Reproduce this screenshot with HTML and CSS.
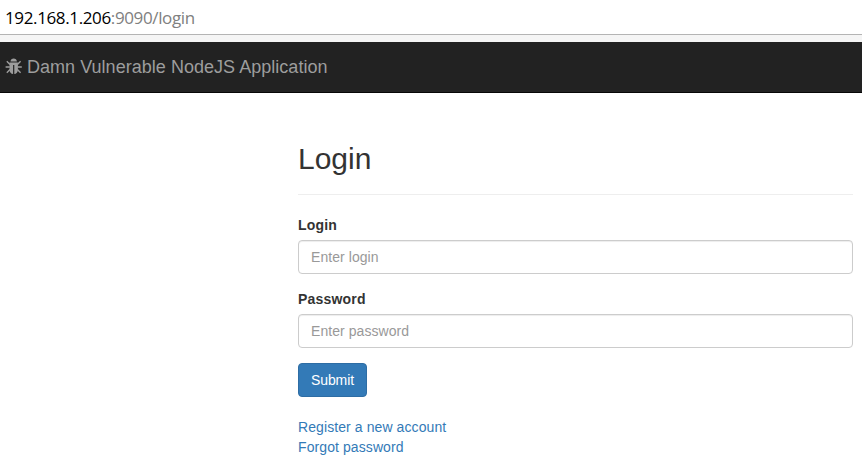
FILE: index.html
```html
<!DOCTYPE html>
<html lang="en">
<head>
<meta charset="utf-8">
<title>Login</title>
<link rel="stylesheet" href="styles.css">
</head>
<body>
<div class="address"><span class="host">192.168.1.206</span>:9090/login</div>
<div class="toolbar-edge"></div>
<nav class="navbar">
<a class="brand"><svg class="bug" viewBox="0 0 18 18" width="18" height="18"><path fill="currentColor" d="M5.500 3.600C5.500 1.800 7 .6 8.700.6s3.200 1.200 3.200 3zM4.500 4.600h8.400v7.200c0 2.500-1.600 4.200-3.600 4.200V7H8.100v9c-2 0-3.600-1.700-3.600-4.200z"/><path fill="none" stroke="currentColor" stroke-width="1.400" d="M5 6.500 1.800 3.300M.6 9h4.200M5 11.600l-3.200 3.200M12.400 6.500l3.200-3.200M12.600 9h4.200M12.400 11.600l3.200 3.200"/></svg><span>Damn Vulnerable NodeJS Application</span></a>
</nav>
<main class="content">
<h1>Login</h1>
<form>
<label for="login">Login</label>
<input id="login" type="text" placeholder="Enter login">
<label for="password">Password</label>
<input id="password" type="password" placeholder="Enter password">
<button type="button">Submit</button>
</form>
<div class="links"><a>Register a new account</a><a>Forgot password</a></div>
</main>
</body>
</html>
```
FILE: styles.css
```css
* { box-sizing: border-box; }
body { margin: 0; height: 472px; overflow: hidden; background: #fff; color: #333; font: 14px/20px "Liberation Sans", Arial, sans-serif; }
.address { height: 35px; padding: 0 5px; border-bottom: 1px solid #b4b4b4; font: 17px/36px "Open Sans", sans-serif; letter-spacing: -.37px; color: #808080; }
.host { color: #000; }
.toolbar-edge { height: 7px; background: #f5f5f5; }
.navbar { height: 51px; padding: 0 5px; background: #222; border-bottom: 1px solid #080808; }
.brand { display: flex; align-items: center; gap: 4px; height: 50px; font-size: 18px; letter-spacing: .03px; color: #9d9d9d; }
.content { margin: 48px 9px 0 298px; }
h1 { margin: 0 0 20px; padding-bottom: 18px; border-bottom: 1px solid #eee; font-size: 30px; font-weight: 500; line-height: 35px; }
label { display: block; margin-bottom: 5px; font-weight: 700; letter-spacing: .2px; }
input { display: block; width: 100%; height: 34px; margin-bottom: 15px; padding: 6px 12px; border: 1px solid #ccc; border-radius: 4px; box-shadow: inset 0 1px 1px rgba(0,0,0,.075); font: inherit; letter-spacing: .06px; }
input::placeholder { color: #999; opacity: 1; }
button { width: 69px; height: 34px; padding: 6px 0; border: 1px solid #2e6da4; border-radius: 4px; background: #337ab7; color: #fff; font: inherit; letter-spacing: -.08px; }
.links { display: flex; flex-direction: column; margin-top: 20px; letter-spacing: .09px; color: #337ab7; }
```
